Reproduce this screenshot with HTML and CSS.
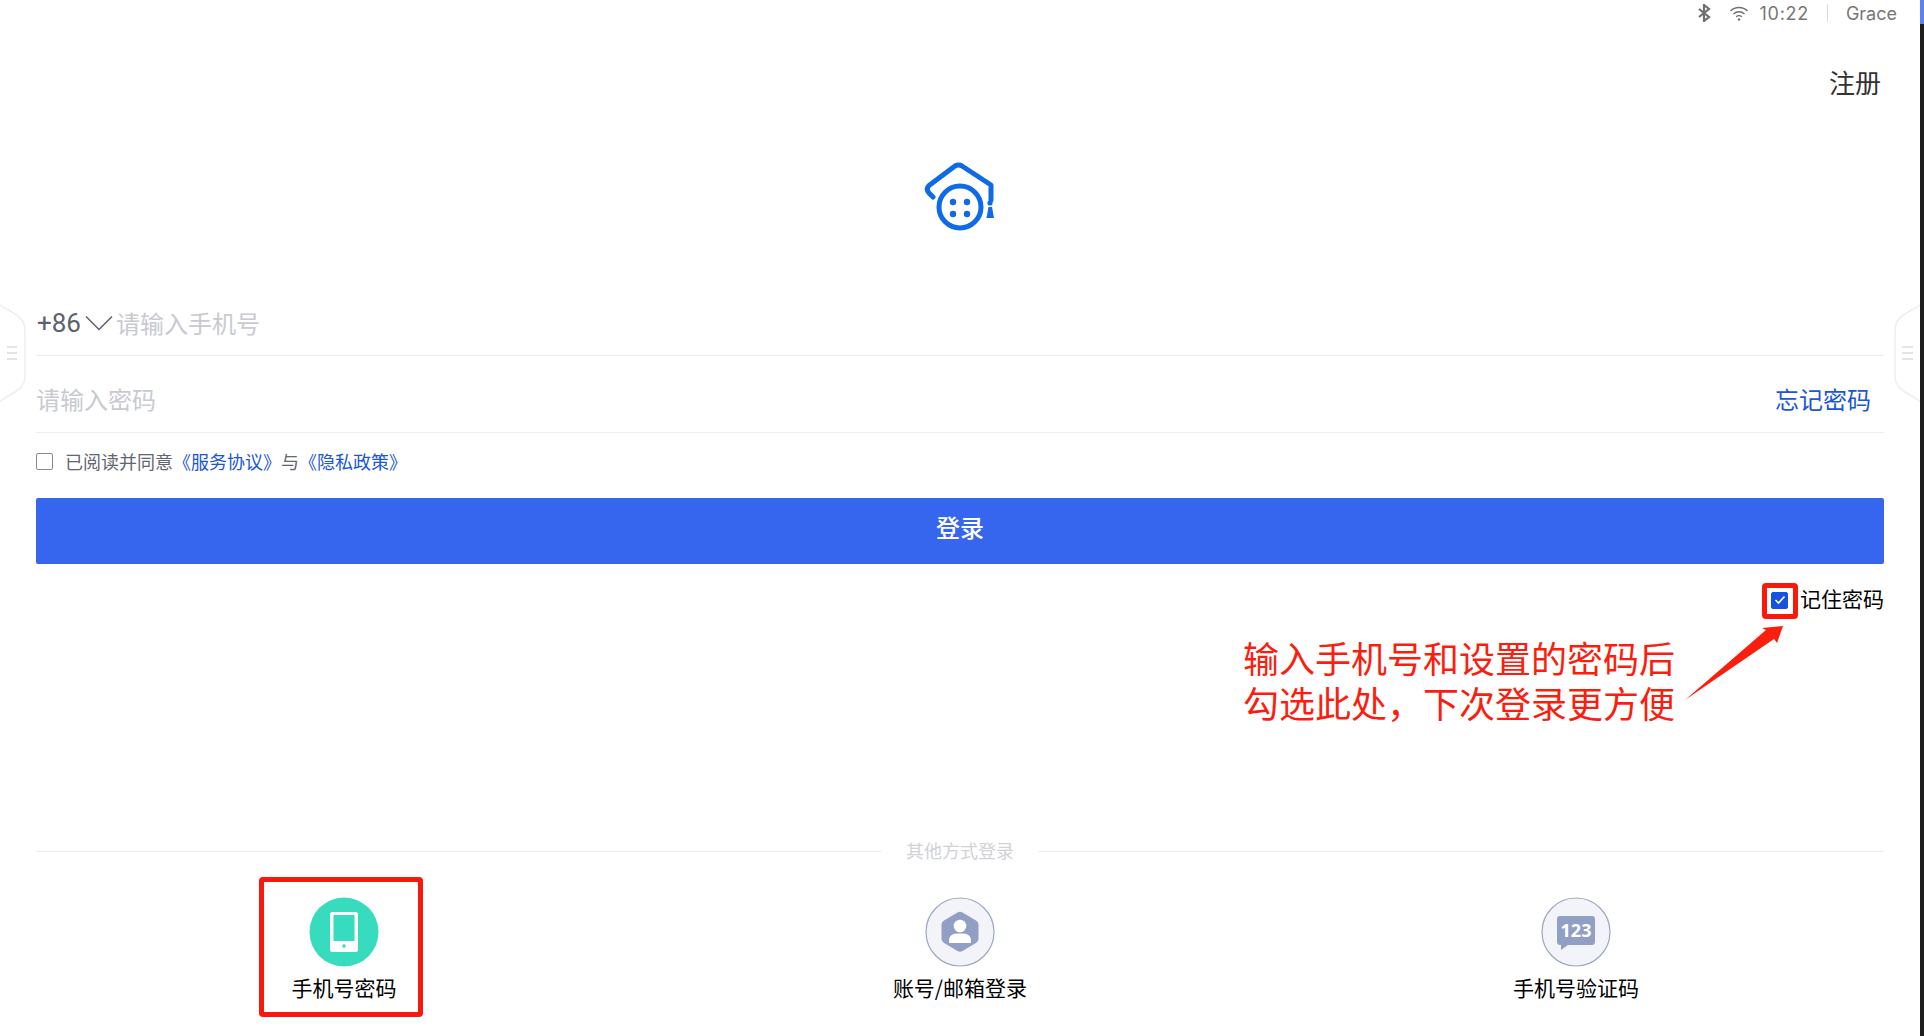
FILE: index.html
```html
<!DOCTYPE html>
<html>
<head>
    <title>登录</title>
    <meta name="viewport" content="width=device-width, initial-scale=1">
    <link rel="stylesheet" href="styles.css">
</head>
<body>
    <div class="page">
        <div class="content">
            <div class="status-bar">
                <svg class="status-icon" width="14" height="18" viewBox="0 0 14 18">
                    <path d="M2 5l10 8-5 4V1l5 4-10 8" fill="none" stroke="#6f6f6f" stroke-width="2.2"/>
                </svg>
                <svg class="status-icon wifi" width="20" height="16" viewBox="0 0 20 16">
                    <path d="M1.5 6a12 12 0 0 1 17 0M4.5 9a8 8 0 0 1 11 0M7.2 11.8a4 4 0 0 1 5.6 0" fill="none" stroke="#6f6f6f" stroke-width="1.4"/>
                    <circle cx="10" cy="14.5" r="1.2" fill="#6f6f6f"/>
                </svg>
                <span class="time">10:22</span>
                <span class="status-sep"></span>
                <span class="user">Grace</span>
            </div>

            <div class="register-row"><a class="register">注册</a></div>

            <div class="logo-row">
                <svg width="74" height="74" viewBox="924 160 74 74">
                    <path d="M934 197l-4-4q-3.500-4 0-7.500l26-19.500q3.500-2 7 0l29 19v15" fill="none" stroke="#0f6ae8" stroke-width="5" stroke-linecap="round" stroke-linejoin="round"/>
                    <circle cx="961" cy="207" r="21" fill="none" stroke="#0f6ae8" stroke-width="5"/>
                    <circle cx="954" cy="202" r="3.200" fill="#0f6ae8"/>
                    <circle cx="968" cy="202" r="3.200" fill="#0f6ae8"/>
                    <circle cx="954" cy="214" r="3.200" fill="#0f6ae8"/>
                    <circle cx="968" cy="214" r="3.200" fill="#0f6ae8"/>
                    <circle cx="991" cy="203" r="2.600" fill="#0f6ae8"/>
                    <path d="M989.500 207h3.500l2 11h-7.500z" fill="#0f6ae8"/>
                </svg>
            </div>

            <div class="field phone-field">
                <span class="area-code">+86</span>
                <svg class="chevron" width="28" height="16" viewBox="0 0 28 16">
                    <path d="M1 1.500l13 13 13-13" fill="none" stroke="#5c6170" stroke-width="1.500"/>
                </svg>
                <input class="field-input" type="text" placeholder="请输入手机号">
            </div>

            <div class="field password-field">
                <input class="field-input" type="password" placeholder="请输入密码">
                <a class="forgot">忘记密码</a>
            </div>

            <div class="agree-row">
                <span class="box"></span>
                <span class="agree-text">已阅读并同意<a class="link">《服务协议》</a>与<a class="link">《隐私政策》</a></span>
            </div>

            <button class="btn-login"><span class="btn-text">登录</span></button>

            <div class="remember-row">
                <span class="box-wrap">
                    <span class="box box-checked">
                        <svg width="12" height="10" viewBox="0 0 12 10">
                            <path d="M1.500 5l3 3 6-6.500" fill="none" stroke="#fff" stroke-width="1.600"/>
                        </svg>
                    </span>
                    <span class="mark-small"></span>
                </span>
                <span class="remember-text">记住密码</span>
            </div>

            <div class="divider">
                <span class="divider-line"></span>
                <span class="divider-text">其他方式登录</span>
                <span class="divider-line"></span>
            </div>

            <div class="methods">
                <div class="method">
                    <svg width="70" height="70" viewBox="-35 -35 70 70">
                        <circle r="34.500" fill="#36dcbd"/>
                        <rect x="-14" y="-20" width="28" height="40" rx="2.500" fill="#fff"/>
                        <rect x="-10.500" y="-17" width="21" height="26" fill="#36dcbd"/>
                        <circle cy="14" r="1.700" fill="#36dcbd"/>
                    </svg>
                    <span class="method-label">手机号密码</span>
                    <span class="mark-large"></span>
                </div>
                <div class="method">
                    <svg width="70" height="70" viewBox="-35 -35 70 70">
                        <circle r="34" fill="#f2f4f9" stroke="#9ca6c2" stroke-width="1.200"/>
                        <path d="M-2.500-19.500q2.500-1.500 5 0l13.500 8q2.500 1.500 2.500 4v14.500q0 2.500-2.500 4l-13.500 8q-2.500 1.500-5 0l-13.500-8q-2.500-1.500-2.500-4v-14.500q0-2.500 2.500-4z" fill="#929fc5"/>
                        <circle cy="-6" r="6.300" fill="#fff"/>
                        <path d="M-10.500 10.500v-1.500q0-7 7-7h7q7 0 7 7v1.500z" fill="#fff" stroke="#fff" stroke-linejoin="round"/>
                    </svg>
                    <span class="method-label">账号/邮箱登录</span>
                </div>
                <div class="method">
                    <svg width="70" height="70" viewBox="-35 -35 70 70">
                        <circle r="34" fill="#f2f4f9" stroke="#9ca6c2" stroke-width="1.200"/>
                        <path d="M-16-16h32q3 0 3 3v23q0 3-3 3h-24l-7 5v-5h-1q-3 0-3-3v-23q0-3 3-3z" fill="#929fc5"/>
                        <text class="bubble-text" y="5" text-anchor="middle">123</text>
                    </svg>
                    <span class="method-label">手机号验证码</span>
                </div>
            </div>

            <div class="side-handle side-left">
                <svg width="26" height="98" viewBox="0 0 26 98">
                    <path d="M0 1l15 9q10 6 10 16v46q0 10-10 16l-15 9" fill="#fff" stroke="#eeeeee" stroke-width="1.500"/>
                    <path d="M7 43h10M7 49h10M7 55h10" stroke="#dddddd" stroke-width="1.500"/>
                </svg>
            </div>
            <div class="side-handle side-right">
                <svg width="26" height="98" viewBox="0 0 26 98">
                    <path d="M26 1l-15 9q-10 6-10 16v46q0 10 10 16l15 9" fill="#fff" stroke="#eeeeee" stroke-width="1.500"/>
                    <path d="M8 43h11M8 49h11M8 55h11" stroke="#dddddd" stroke-width="1.500"/>
                </svg>
            </div>

            <div class="note">输入手机号和设置的密码后<br>勾选此处，下次登录更方便</div>
            <svg class="note-arrow" width="104" height="80" viewBox="1682 624 104 80">
                <path d="M1685 700L1766 630 1762 628 1783 626 1777 643 1774 639z" fill="#fa1e0e"/>
            </svg>
        </div>
        <div class="edge"><span class="edge-top"></span></div>
    </div>
</body>
</html>
```

FILE: styles.css
```css
* {
    margin: 0;
    padding: 0;
    box-sizing: border-box;
}

html, body {
    height: 100%;
    overflow: hidden;
}

body {
    font-family: "Noto Sans CJK SC", "Noto Sans", sans-serif;
    background: white;
    color: #333;
}

.page {
    display: flex;
    height: 1036px;
}

.content {
    position: relative;
    flex: 1;
    display: flex;
    flex-direction: column;
    padding: 0 36px;
    overflow: hidden;
}

.edge {
    width: 4px;
    background: #1e1e1e;
}

.edge-top {
    display: block;
    height: 24px;
    background: #5b82f0;
}

/* status bar */
.status-bar {
    display: flex;
    align-items: center;
    justify-content: flex-end;
    height: 24px;
    padding-top: 2px;
    margin-right: -13px;
    color: #777;
    font-family: Inter, "Noto Sans", sans-serif;
    font-size: 18px;
}

.status-icon {
    margin-right: 18px;
}

.wifi {
    margin-right: 11px;
}

.time {
    letter-spacing: 0.7px;
}

.status-sep {
    width: 1px;
    height: 18px;
    background: #ddd;
    margin: 0 18px;
}

.register-row {
    display: flex;
    justify-content: flex-end;
    padding-top: 40px;
    height: 78px;
}

.register {
    font-size: 26px;
    line-height: 36px;
    color: #333;
    margin-right: 3px;
}

.logo-row {
    display: flex;
    justify-content: center;
    margin-top: 58px;
    height: 72px;
}

/* form */
.field {
    display: flex;
    align-items: center;
    border-bottom: 1px solid #eeeeee;
}

.phone-field {
    height: 67px;
    margin-top: 57px;
}

.password-field {
    height: 77px;
    padding-top: 8px;
}

.area-code {
    font-family: Roboto, "Noto Sans", sans-serif;
    font-size: 26px;
    color: #5c6170;
    padding: 2px 0 0 1px;
}

.chevron {
    margin: 2px 3px 0 4px;
}

.field-input {
    flex: 1;
    border: none;
    outline: none;
    font-family: inherit;
    font-size: 24px;
    color: #333;
    background: transparent;
}

.field-input::placeholder {
    color: #c8cad0;
}

.forgot {
    font-size: 24px;
    color: #1a56d6;
    margin-right: 13px;
}

.agree-row {
    display: flex;
    align-items: center;
    gap: 12px;
    height: 36px;
    margin-top: 10px;
}

.box {
    display: inline-flex;
    align-items: center;
    justify-content: center;
    width: 17px;
    height: 17px;
    border: 1.500px solid #8a8a8a;
    border-radius: 2px;
}

.agree-text {
    font-size: 18px;
    color: #62666f;
}

.link {
    color: #1a56d6;
}

.btn-login {
    display: block;
    height: 66px;
    margin-top: 19px;
    border: none;
    border-radius: 2px;
    background: #3766ee;
    color: white;
    font-family: inherit;
    font-size: 24px;
    font-weight: 500;
}

.btn-text {
    display: block;
    margin-top: -9px;
}

.remember-row {
    display: flex;
    align-items: center;
    justify-content: flex-end;
    gap: 12px;
    height: 36px;
    margin-top: 18px;
}

.box-wrap {
    position: relative;
    display: inline-flex;
}

.box-checked {
    background: #1553e0;
    border-color: #1553e0;
}

.mark-small {
    position: absolute;
    left: -9px;
    top: -9px;
    width: 36px;
    height: 36px;
    border: 5px solid #f8190c;
    border-radius: 4px;
}

.remember-text {
    font-size: 21px;
    color: #000;
    padding-bottom: 4px;
}

/* other login methods */
.divider {
    display: flex;
    align-items: center;
    height: 24px;
    margin-top: 221px;
}

.divider-line {
    flex: 1;
    height: 1px;
    background: #eeeeee;
}

.divider-text {
    margin: 0 24px;
    font-size: 18px;
    color: #d0d2d8;
    padding-bottom: 2px;
}

.methods {
    display: grid;
    grid-template-columns: 1fr 1fr 1fr;
    margin-top: 34px;
}

.method {
    position: relative;
    display: flex;
    flex-direction: column;
    align-items: center;
    gap: 3px;
}

.method-label {
    font-size: 21px;
    line-height: 34px;
    color: #000;
}

.mark-large {
    position: absolute;
    left: 223px;
    top: -20px;
    width: 164px;
    height: 140px;
    border: 5px solid #f8190c;
    border-radius: 4px;
}

.bubble-text {
    font-family: "Noto Sans", sans-serif;
    font-size: 18px;
    font-weight: 700;
    fill: #fff;
}

/* overlays */
.side-handle {
    position: absolute;
    top: 304px;
    width: 26px;
    height: 98px;
}

.side-left {
    left: 0;
}

.side-right {
    right: 0;
}

.note {
    position: absolute;
    left: 1243px;
    top: 638px;
    font-family: "Liberation Sans", "Noto Sans CJK SC", sans-serif;
    font-size: 36px;
    line-height: 45px;
    color: #fa1e0e;
    white-space: nowrap;
}

.note-arrow {
    position: absolute;
    left: 1682px;
    top: 624px;
}
```
